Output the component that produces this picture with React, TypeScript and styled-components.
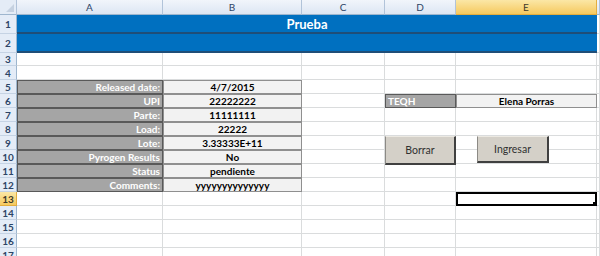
import { FC, Fragment } from 'react'
import styled, { createGlobalStyle, css } from 'styled-components'

const GlobalStyle = createGlobalStyle`
  html, body {
    margin: 0;
    padding: 0;
    background: #ffffff;
    overflow: hidden;
  }
  body {
    font-family: Lato, 'Liberation Sans', sans-serif;
  }
`

const columns = ['A', 'B', 'C', 'D', 'E']
const rowHeights = [19, 19, 13, 14, 14, 14, 14, 14, 14, 14, 14, 14, 14, 14, 14, 14, 14]

const records: [string, string][] = [
  ['Released date:', '4/7/2015'],
  ['UPI', '22222222'],
  ['Parte:', '11111111'],
  ['Load:', '22222'],
  ['Lote:', '3.33333E+11'],
  ['Pyrogen Results', 'No'],
  ['Status', 'pendiente'],
  ['Comments:', 'yyyyyyyyyyyyyy'],
]

const App: FC = () => {
  const renderRow = (row: number) => {
    if (row === 1) {
      return (
        <TitleCell $span={5}>
          <span>Prueba</span>
        </TitleCell>
      )
    }
    if (row === 2) return <TitleCell $span={5} />

    if (row >= 5 && row <= 12) {
      const [label, value] = records[row - 5]
      return (
        <>
          <LabelCell>{label}</LabelCell>
          <ValueCell>{value}</ValueCell>
          <Cell />
          {row === 6 ? <LabelCell $left>TEQH</LabelCell> : <Cell />}
          {row === 6 ? <ValueCell>Elena Porras</ValueCell> : <Cell />}
        </>
      )
    }

    return (
      <>
        <Cell />
        <Cell />
        <Cell />
        <Cell />
        {row === 13 ? (
          <SelectedCell>
            <FillHandle />
          </SelectedCell>
        ) : (
          <Cell />
        )}
      </>
    )
  }

  return (
    <>
      <GlobalStyle />
      <Sheet>
        <Grid>
          <Corner>
            <CornerMark />
          </Corner>
          {columns.map((c) => (
            <ColHeader key={c} $active={c === 'E'}>
              {c}
            </ColHeader>
          ))}
          <ColHeader />
          {rowHeights.map((_, i) => {
            const row = i + 1
            return (
              <Fragment key={row}>
                <RowHeader $active={row === 13}>{row}</RowHeader>
                {renderRow(row)}
                <Cell />
              </Fragment>
            )
          })}
        </Grid>
        <FormButton $left={385} $top={136} $w={71} $h={29}>
          Borrar
        </FormButton>
        <FormButton $left={477} $top={136} $w={72} $h={27}>
          Ingresar
        </FormButton>
      </Sheet>
    </>
  )
}

const Sheet = styled.div`
  position: relative;
  width: 600px;
  height: 256px;
  overflow: hidden;
  background: #ffffff;
`

const Grid = styled.div`
  display: grid;
  grid-template-columns: 17px 146px 139px 83px 71px 141px 1fr;
  grid-template-rows: 15px ${rowHeights.map((h) => `${h}px`).join(' ')};
`

const headerBase = css`
  box-sizing: border-box;
  display: flex;
  align-items: center;
  justify-content: center;
  font-size: 10px;
  color: #2c4466;
  background: linear-gradient(#f1f5fb, #dce6f3);
  border-right: 1px solid #b1c3d9;
  border-bottom: 1px solid #9eb6ce;
`

const activeHeader = css`
  background: linear-gradient(#fbe7a6, #f5c95f);
  color: #3e3a2a;
  border-bottom-color: #e3ae3f;
  border-right-color: #e3ae3f;
`

const Corner = styled.div`
  ${headerBase}
  position: relative;
  background: #e4ecf6;
`

const CornerMark = styled.div`
  position: absolute;
  right: 2px;
  bottom: 2px;
  width: 0;
  height: 0;
  border-left: 8px solid transparent;
  border-bottom: 8px solid #c5d1e0;
`

const ColHeader = styled.div<{ $active?: boolean }>`
  ${headerBase}
  ${({ $active }) => $active && activeHeader}
`

const RowHeader = styled.div<{ $active?: boolean }>`
  ${headerBase}
  background: #e4ecf7;
  font-weight: bold;
  border-bottom-color: #c5d3e4;
  border-right-color: #9eb6ce;
  ${({ $active }) => $active && activeHeader}
`

const Cell = styled.div`
  box-sizing: border-box;
  border-right: 1px solid #dadcdd;
  border-bottom: 1px solid #dadcdd;
  font-size: 10px;
  white-space: nowrap;
  overflow: hidden;
`

const TitleCell = styled.div<{ $span: number }>`
  grid-column: span ${({ $span }) => $span};
  box-sizing: border-box;
  display: flex;
  align-items: center;
  justify-content: center;
  background: #0070c0;
  border-bottom: 2px solid #1f4e78;
  color: #ffffff;
  font-size: 13px;
  font-weight: bold;
  padding-top: 1px;
`

const LabelCell = styled(Cell)<{ $left?: boolean }>`
  display: flex;
  align-items: center;
  justify-content: ${({ $left }) => ($left ? 'flex-start' : 'flex-end')};
  padding: 0 2px;
  background: #a5a5a5;
  border: 1px solid #595959;
  color: #ffffff;
  font-weight: bold;
`

const ValueCell = styled(Cell)`
  display: flex;
  align-items: center;
  justify-content: center;
  background: #f2f2f2;
  border: 1px solid #8f8f8f;
  color: #000000;
  font-weight: bold;
`

const SelectedCell = styled(Cell)`
  position: relative;
  border: 2px solid #000000;
`

const FillHandle = styled.div`
  position: absolute;
  right: -4px;
  bottom: -4px;
  width: 5px;
  height: 5px;
  background: #000000;
  border: 1px solid #ffffff;
`

const FormButton = styled.div<{ $left: number; $top: number; $w: number; $h: number }>`
  position: absolute;
  left: ${({ $left }) => $left}px;
  top: ${({ $top }) => $top}px;
  width: ${({ $w }) => $w}px;
  height: ${({ $h }) => $h}px;
  box-sizing: border-box;
  display: flex;
  align-items: center;
  justify-content: center;
  background: #d4d0c8;
  border-top: 1px solid #ece9e2;
  border-left: 1px solid #8c8a85;
  border-right: 2px solid #404040;
  border-bottom: 2px solid #404040;
  color: #303030;
  font-size: 10.5px;
`

export default App
